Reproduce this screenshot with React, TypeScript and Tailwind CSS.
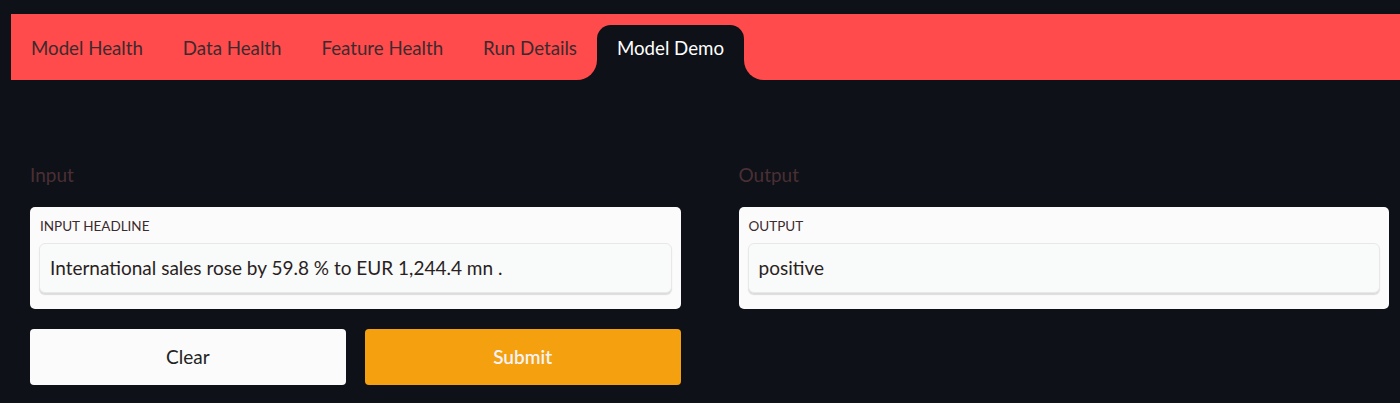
const tabs = ["Model Health", "Data Health", "Feature Health", "Run Details", "Model Demo"];

function Tab({ label, active }: { label: string; active: boolean }) {
  if (!active) {
    return <div className="px-5 pt-[22px] pb-[20px] text-[18.7px] leading-6 text-[#3b2a2e]">{label}</div>;
  }
  return (
    <div className="relative mt-[11px] rounded-t-[14px] bg-[#0e1117] px-5 pt-[11px] pb-[20px] text-[18.7px] leading-6 text-white">
      {label}
      <span className="absolute bottom-0 -left-5 h-5 w-5 bg-[#0e1117]">
        <span className="block h-full w-full rounded-br-[20px] bg-[#ff4b4b]" />
      </span>
      <span className="absolute bottom-0 -right-5 h-5 w-5 bg-[#0e1117]">
        <span className="block h-full w-full rounded-bl-[20px] bg-[#ff4b4b]" />
      </span>
    </div>
  );
}

function Field({ label, value }: { label: string; value: string }) {
  return (
    <div className="rounded-[5px] bg-[#fbfbfb] px-[9px] pt-[10px] pb-[16px]">
      <div className="pl-px text-[13.5px] leading-[18px] text-[#3b2a2e]">{label}</div>
      <div className="mt-[8px] flex h-[50px] items-center rounded-[6px] border border-[#e8e8e8] bg-[#f9fafa] px-[10px] text-[19px] text-[#2a1f22] shadow-[0_2px_1px_#dcdcdc]">
        {value}
      </div>
    </div>
  );
}

export default function App() {
  return (
    <div className="min-h-[403px] bg-[#0e1117] pt-[14px] font-['Lato','Open_Sans',sans-serif]">
      <nav className="ml-[11px] flex h-[66px] items-start bg-[#ff4b4b]">
        {tabs.map((t) => (
          <Tab key={t} label={t} active={t === "Model Demo"} />
        ))}
      </nav>

      <main className="grid grid-cols-2 gap-[58px] pt-[83px] pl-[30px] pr-[11px]">
        <section>
          <h2 className="mb-[20px] text-[19px] leading-6 font-normal text-[#4a2f35]">Input</h2>
          <Field label="INPUT HEADLINE" value="International sales rose by 59.8 % to EUR 1,244.4 mn ." />
          <div className="mt-[20px] grid grid-cols-2 gap-[19px]">
            <button className="h-[56px] rounded-[4px] bg-[#fbfbfb] text-[19px] text-[#222]">Clear</button>
            <button className="h-[56px] rounded-[4px] bg-[#f5a00f] text-[19px] font-semibold text-[#f4f4f8]">Submit</button>
          </div>
        </section>
        <section>
          <h2 className="mb-[20px] text-[19px] leading-6 font-normal text-[#4a2f35]">Output</h2>
          <Field label="OUTPUT" value="positive" />
        </section>
      </main>
    </div>
  );
}
